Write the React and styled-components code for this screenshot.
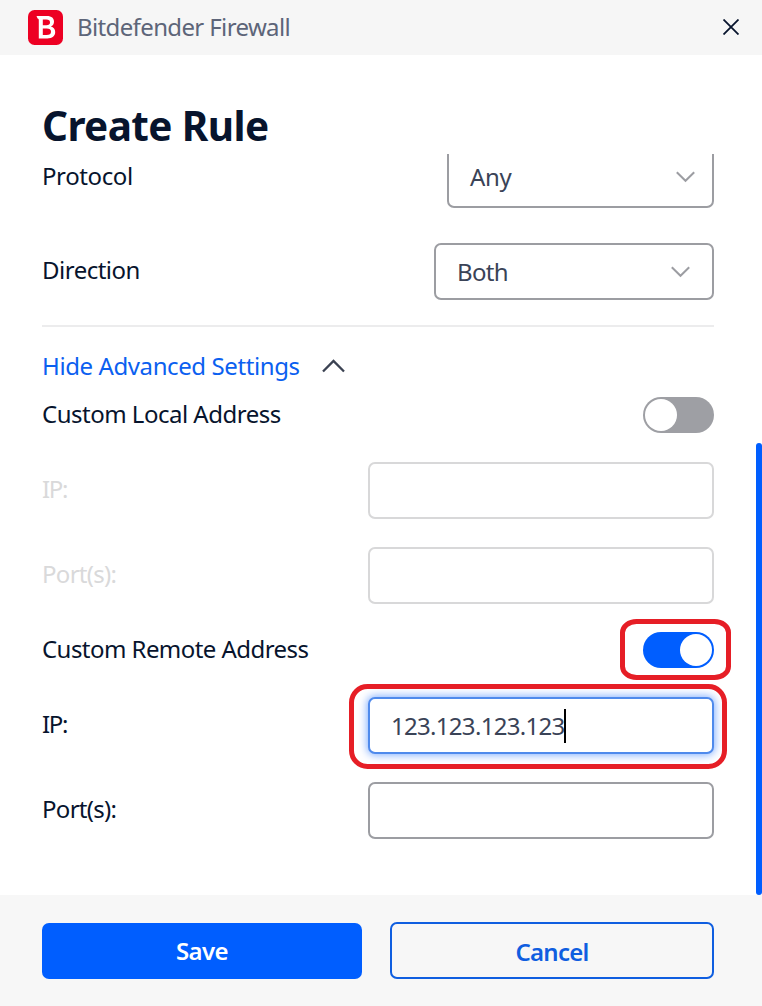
import React from "react";
import styled, { createGlobalStyle } from "styled-components";

const GlobalStyle = createGlobalStyle`
  *, *::before, *::after { box-sizing: border-box; }
  body { margin: 0; background: #fff; font-family: "Noto Sans", "Open Sans", sans-serif; }
`;

const Window = styled.div`
  position: relative;
  display: flex;
  flex-direction: column;
  width: 762px;
  height: 1006px;
  overflow: hidden;
  background: #fff;
  color: #07142d;
`;

const Text = styled.span`
  padding-bottom: ${(p) => p.$lift || 0}px;
  font-size: 24px;
  font-weight: ${(p) => p.$weight || 400};
  letter-spacing: ${(p) => p.$track || 0}px;
  color: ${(p) => p.$color || "inherit"};
  line-height: 32px;
  white-space: nowrap;
`;

const TitleBar = styled.header`
  display: flex;
  align-items: center;
  flex: none;
  height: 55px;
  padding: 0 23px 0 28px;
  gap: 14px;
  background: #f6f6f6;
`;

const CloseButton = styled.button`
  display: flex;
  margin-left: auto;
  padding: 0 0 1px;
  border: 0;
  background: none;
`;

const Heading = styled.h1`
  flex: none;
  height: 99px;
  margin: 0;
  padding: 44px 42px 0;
  font-size: 40.5px;
  font-weight: 700;
  line-height: 54px;
  letter-spacing: -0.6px;
  white-space: nowrap;
`;

const Body = styled.main`
  position: relative;
  flex: 1;
  min-height: 0;
  padding: 0 48px 0 42px;
  overflow: hidden;
`;

const Row = styled.div`
  display: flex;
  align-items: center;
  justify-content: space-between;
  height: ${(p) => p.$height || 57}px;
  margin-top: ${(p) => p.$gap || 0}px;
`;

const Select = styled.div`
  display: flex;
  align-items: center;
  justify-content: space-between;
  width: ${(p) => p.$width}px;
  height: 100%;
  padding: 0 ${(p) => p.$end}px 0 21px;
  border: 2px solid #9c9da2;
  border-radius: 7px;
  color: #3a4357;
`;

const Field = styled.div`
  display: flex;
  align-items: center;
  width: 346px;
  height: 57px;
  padding-left: 21px;
  border: 2px solid ${(p) => (p.$focused ? "#4f8aec" : p.$disabled ? "#d8d8d9" : "#9c9da2")};
  border-radius: 7px;
  background: #fff;
  color: #3a4357;
  box-shadow: ${(p) => (p.$focused ? "0 0 8px 1px rgba(0, 94, 255, 0.5)" : "none")};
`;

const Caret = styled.i`
  width: 2px;
  height: 34px;
  margin-left: -1px;
  background: #000;
`;

const Divider = styled.hr`
  height: 2px;
  margin: 25px 0 0;
  border: 0;
  background: #ececed;
`;

const AdvancedLink = styled.div`
  display: flex;
  align-items: center;
  height: 70px;
  padding-top: 8px;
  gap: 22px;
  color: #0b60f0;
`;

const Toggle = styled.div`
  display: flex;
  align-items: center;
  justify-content: ${(p) => (p.$on ? "flex-end" : "flex-start")};
  width: 71px;
  height: 36px;
  padding: 0 2px;
  border-radius: 18px;
  background: ${(p) => (p.$on ? "#005eff" : "#9e9fa4")};
`;

const Knob = styled.span`
  width: 32px;
  height: 32px;
  border-radius: 50%;
  background: #fff;
`;

const ScrollThumb = styled.div`
  position: absolute;
  right: 0;
  top: 289px;
  width: 6px;
  height: 452px;
  border-radius: 3px;
  background: #005eff;
`;

const Footer = styled.footer`
  display: flex;
  align-items: flex-end;
  flex: none;
  height: 111px;
  padding: 0 48px 27px 42px;
  gap: 28px;
  background: #f7f7f7;
`;

const Button = styled.button`
  display: flex;
  align-items: center;
  justify-content: center;
  width: ${(p) => (p.$primary ? 320 : 324)}px;
  height: ${(p) => (p.$primary ? 56 : 57)}px;
  padding: ${(p) => (p.$primary ? 0 : "2px")} 0 0;
  border: ${(p) => (p.$primary ? "0" : "2px solid #0f5ee0")};
  border-radius: 7px;
  background: ${(p) => (p.$primary ? "#005eff" : "transparent")};
  color: ${(p) => (p.$primary ? "#fff" : "#0f5ee0")};
  font-family: inherit;
`;

const Markup = styled.svg`
  position: absolute;
  left: 340px;
  top: 610px;
  pointer-events: none;
`;

const Logo = () => (
  <svg width="35" height="35" viewBox="0 0 35 35">
    <rect width="35" height="35" rx="6.5" fill="#ed0023" />
    <path
      fill="#fff"
      fillRule="evenodd"
      d="M8.5 6H18.8C23.8 6 26 8.4 26 11.7C26 14 24.8 15.7 22.9 16.5C25.6 17.2 27.2 19.2 27.2 22C27.2 26.2 24.2 28.4 19.3 28.4H10.8V10.2C10.8 9.2 10.4 8.8 9.6 8.6ZM14.8 9.6V15.2H18.4C20.8 15.2 22 14.2 22 12.4C22 10.5 20.8 9.6 18.4 9.6ZM14.8 18.5V24.9H18.6C21.5 24.9 23 23.8 23 21.7C23 19.6 21.5 18.5 18.6 18.5Z"
    />
  </svg>
);

const ChevronDown = () => (
  <svg width="19" height="12" viewBox="0 0 19 12" fill="none" stroke="#9c9da2" strokeWidth="2">
    <path d="M0.8 1.3L9.5 9.8L18.2 1.3" />
  </svg>
);

const ChevronUp = () => (
  <svg width="23" height="14" viewBox="0 0 23 14" fill="none" stroke="#3b4252" strokeWidth="2.3">
    <path d="M1 12.5L11.5 2L22 12.5" />
  </svg>
);

export default function App() {
  return (
    <Window>
      <GlobalStyle />
      <TitleBar>
        <Logo />
        <Text $color="#5d6579" $track={-0.63} $lift={1}>Bitdefender Firewall</Text>
        <CloseButton aria-label="Close">
          <svg width="16" height="16" viewBox="0 0 16 16" stroke="#07142d" strokeWidth="1.8">
            <path d="M0.5 0.5L15.5 15.5M15.5 0.5L0.5 15.5" />
          </svg>
        </CloseButton>
      </TitleBar>
      <Heading>Create Rule</Heading>
      <Body>
        <Row $gap={-9} $height={63}>
          <Text $track={-0.4} $lift={1}>Protocol</Text>
          <Select $width={267} $end={17}>
            <Text $track={-0.3}>Any</Text>
            <ChevronDown />
          </Select>
        </Row>
        <Row $gap={35}>
          <Text $track={-0.5} $lift={3}>Direction</Text>
          <Select $width={280} $end={22}>
            <Text $track={-0.7}>Both</Text>
            <ChevronDown />
          </Select>
        </Row>
        <Divider />
        <AdvancedLink>
          <Text $track={-0.4}>Hide Advanced Settings</Text>
          <ChevronUp />
        </AdvancedLink>
        <Row $height={36}>
          <Text $track={-0.5} $lift={2}>Custom Local Address</Text>
          <Toggle><Knob /></Toggle>
        </Row>
        <Row $gap={29}>
          <Text $color="#d9d9da" $track={-1.3} $lift={3}>IP:</Text>
          <Field $disabled />
        </Row>
        <Row $gap={28}>
          <Text $color="#d9d9da" $track={-0.7} $lift={3}>Port(s):</Text>
          <Field $disabled />
        </Row>
        <Row $gap={28} $height={36}>
          <Text $track={-0.55} $lift={2}>Custom Remote Address</Text>
          <Toggle $on><Knob /></Toggle>
        </Row>
        <Row $gap={29}>
          <Text $track={-1.3} $lift={3}>IP:</Text>
          <Field $focused>
            <Text $track={-0.7}>123.123.123.123</Text>
            <Caret />
          </Field>
        </Row>
        <Row $gap={28}>
          <Text $track={-0.7} $lift={3}>Port(s):</Text>
          <Field />
        </Row>
        <ScrollThumb />
      </Body>
      <Footer>
        <Button $primary><Text $weight={600} $track={-0.6}>Save</Text></Button>
        <Button><Text $weight={600} $track={-0.75}>Cancel</Text></Button>
      </Footer>
      <Markup width="400" height="170" viewBox="340 610 400 170" fill="none" stroke="#e61e26" strokeWidth="5">
        <rect x="622.5" y="621.5" width="106" height="56" rx="14" ry="11" />
        <rect x="351.5" y="686.5" width="373" height="80" rx="16" ry="16" />
      </Markup>
    </Window>
  );
}
